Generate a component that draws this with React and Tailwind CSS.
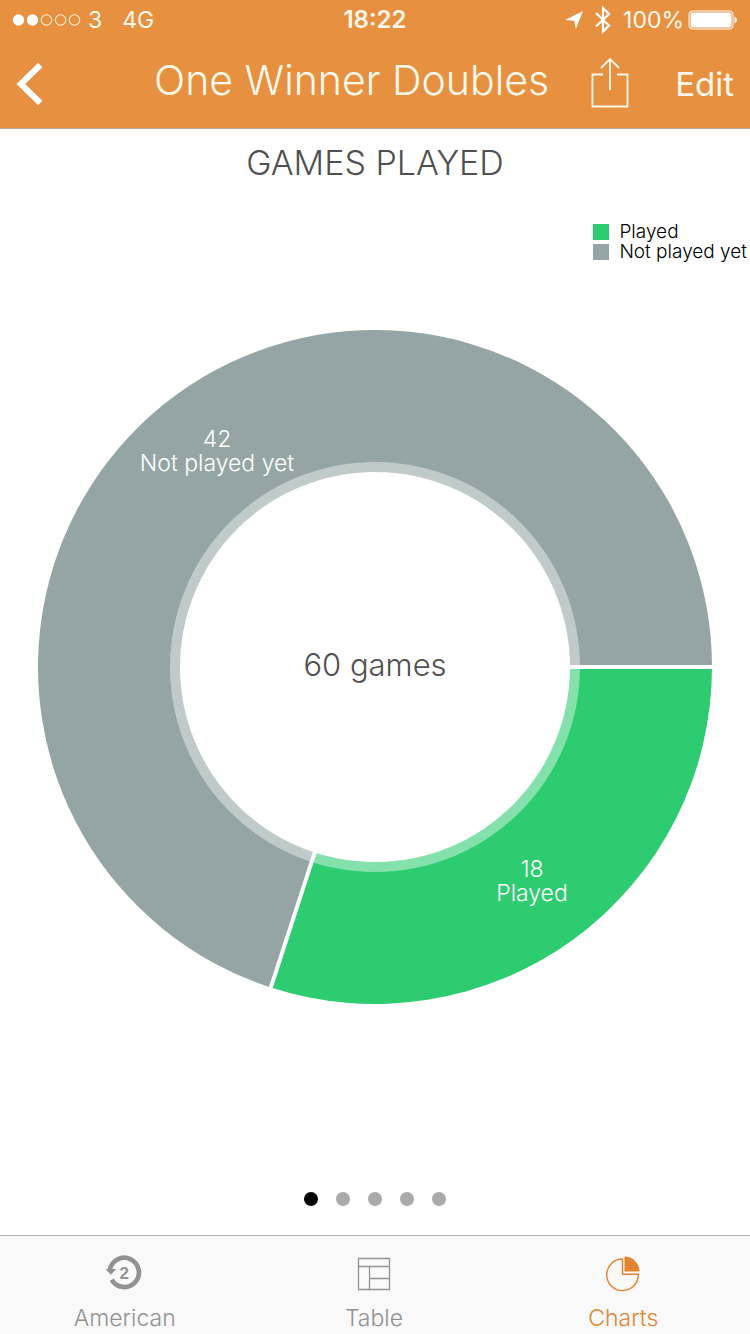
const CENTER = 337;
const OUTER = 337;
const HOLE = 195;
const RING = 205;

const slices = [
  { label: "Played", value: 18, color: "#2ecc71", x: 494, y: 547 },
  { label: "Not played yet", value: 42, color: "#95a5a5", x: 179, y: 117 },
];
const total = slices.reduce((sum, s) => sum + s.value, 0);

function point(radius, angle) {
  return [CENTER + radius * Math.cos(angle), CENTER + radius * Math.sin(angle)];
}

function slicePath(start, end) {
  const [x1, y1] = point(OUTER, start);
  const [x2, y2] = point(OUTER, end);
  const large = end - start > Math.PI ? 1 : 0;
  return `M${CENTER} ${CENTER}L${x1} ${y1}A${OUTER} ${OUTER} 0 ${large} 1 ${x2} ${y2}Z`;
}

function Donut() {
  let angle = 0;
  const arcs = slices.map((s) => {
    const start = angle;
    angle += (s.value / total) * Math.PI * 2;
    return { ...s, start, end: angle };
  });
  return (
    <svg viewBox="0 0 674 674" className="block w-full" role="img" aria-label="Games played">
      {arcs.map((a) => (
        <path key={a.label} d={slicePath(a.start, a.end)} fill={a.color} />
      ))}
      <circle cx={CENTER} cy={CENTER} r={RING} fill="#fff" fillOpacity="0.41" />
      {arcs.map((a) => {
        const [x, y] = point(OUTER + 2, a.start);
        return <line key={a.label} x1={CENTER} y1={CENTER} x2={x} y2={y} stroke="#fff" strokeWidth="4" />;
      })}
      <circle cx={CENTER} cy={CENTER} r={HOLE} fill="#fff" />
      <text x={CENTER} y="346" textAnchor="middle" fill="#505050" className="text-[31px] font-light">
        {total} games
      </text>
      <g fill="#fff" textAnchor="middle" className="text-[23px] font-light">
        {slices.map((s) => (
          <g key={s.label}>
            <text x={s.x} y={s.y}>{s.value}</text>
            <text x={s.x} y={s.y + 24}>{s.label}</text>
          </g>
        ))}
      </g>
    </svg>
  );
}

function StatusBar() {
  return (
    <div className="grid h-10 grid-cols-3 items-center px-3 text-[23px] leading-10">
      <div className="flex items-center">
        <svg width="70" height="14" viewBox="0 0 70 14" aria-hidden="true">
          <circle cx="6.5" cy="7" r="5.7" fill="#fff" />
          <circle cx="20.5" cy="7" r="5.7" fill="#fff" />
          <g fill="none" stroke="#fff0da" strokeWidth="1.1">
            <circle cx="34.5" cy="7" r="5.2" />
            <circle cx="48.5" cy="7" r="5.2" />
            <circle cx="62.5" cy="7" r="5.2" />
          </g>
        </svg>
        <span className="ml-1.5">3</span>
        <span className="ml-5">4G</span>
      </div>
      <div className="text-center text-[24px] font-semibold">18:22</div>
      <div className="flex items-center justify-end">
        <svg width="18" height="18" viewBox="0 0 18 18" aria-hidden="true">
          <path d="M0 9 18 0 10.800 18 9.200 9.800Z" fill="#fff" />
        </svg>
        <svg className="ml-3" width="16" height="28" viewBox="0 0 16 28" fill="none" stroke="#fff" strokeWidth="2.2" aria-hidden="true">
          <path d="M1 7 14 19.500 8 25.500V2L14 8 1 20.500" />
        </svg>
        <span className="ml-3">100%</span>
        <svg className="ml-1" width="50" height="20" viewBox="0 0 50 20" aria-hidden="true">
          <rect x="1" y="1" width="44" height="18" rx="3.500" fill="none" stroke="#fff" strokeWidth="1" />
          <rect x="2.500" y="2.500" width="41" height="15" rx="2" fill="#fff" />
          <path d="M46.500 6.500Q49 7.500 49 10T46.500 13.500Z" fill="#fff" />
        </svg>
      </div>
    </div>
  );
}

function TabLink({ label, active, children }) {
  return (
    <a
      href="#"
      aria-current={active ? "page" : undefined}
      className={
        active
          ? "flex flex-col items-center pt-4 text-[#e38430]"
          : "flex flex-col items-center pt-4 text-[#929292]"
      }
    >
      <svg width="44" height="44" viewBox="0 0 44 44" fill="none" stroke="currentColor" aria-hidden="true">
        {children}
      </svg>
      <span className="mt-2 text-[23px] leading-7 font-light">{label}</span>
    </a>
  );
}

export default function App() {
  return (
    <div className="flex min-h-screen flex-col bg-white font-['Inter',sans-serif]">
      <header className="border-b border-[#b9a99a] bg-[#e69040] text-[#fff9ec]">
        <StatusBar />
        <div className="flex h-[88px] items-center px-4">
          <button aria-label="Back" className="w-24 shrink-0">
            <svg width="28" height="44" viewBox="0 0 28 44" fill="none" stroke="#fff" strokeWidth="6" aria-hidden="true">
              <path d="M24.300 3 4.800 22 24.300 41" />
            </svg>
          </button>
          <h1 className="flex-1 pb-2 text-center text-[41px] leading-11 font-light whitespace-nowrap">One Winner Doubles</h1>
          <button aria-label="Share" className="shrink-0 pb-1">
            <svg width="38" height="52" viewBox="0 0 38 52" fill="none" stroke="currentColor" strokeWidth="1.800" aria-hidden="true">
              <path d="M12 18.500H1.500V50.500H36.500V18.500H26M19 34V3M10 12 19 3 28 12" />
            </svg>
          </button>
          <button className="ml-[46px] shrink-0 text-[33px] leading-11">Edit</button>
        </div>
      </header>

      <main className="flex flex-1 flex-col">
        <h2 className="pt-3 text-center text-[34px] leading-11 font-light text-[#505050]">GAMES PLAYED</h2>
        <ul className="mt-[37px] self-end pr-[3px] text-[19px] leading-5 font-light text-black">
          {slices.map((s) => (
            <li key={s.label} className="flex items-center gap-2.5">
              <span className="size-4" style={{ backgroundColor: s.color }} />
              {s.label}
            </li>
          ))}
        </ul>
        <div className="px-[38px] pt-[68px]">
          <Donut />
        </div>
        <div className="mt-auto flex justify-center gap-[18px] pb-[29px]">
          {[0, 1, 2, 3, 4].map((page) => (
            <button
              key={page}
              aria-label={`Chart ${page + 1}`}
              className={page === 0 ? "size-3.5 rounded-full bg-black" : "size-3.5 rounded-full bg-[#aaaaaa]"}
            />
          ))}
        </div>
      </main>

      <nav className="grid h-[99px] grid-cols-3 border-t border-[#b2b2b2] bg-[#f9f9f9] pr-0.5">
        <TabLink label="American">
          <path d="M6.900 18A14.600 14.600 0 1 1 8.700 27.800" strokeWidth="4.700" />
          <path d="M2.600 17H13.200L7.900 22.800Z" fill="currentColor" stroke="none" />
          <text x="21.3" y="26.500" textAnchor="middle" fill="currentColor" stroke="none" className="font-['Liberation_Sans',sans-serif] text-[17px] font-bold">2</text>
        </TabLink>
        <TabLink label="Table">
          <path d="M6.500 6.500H37.500V37.500H6.500ZM6.500 14.500H37.500M17.500 14.500V37.500M17.500 26.500H37.500" strokeWidth="1.300" />
        </TabLink>
        <TabLink label="Charts" active>
          <path d="M21.500 7A15.800 15.800 0 1 0 37.300 22.200H21.500Z" strokeWidth="1.500" />
          <path d="M23.500 4.500A15 15 0 0 1 38.500 19.500H23.500Z" fill="currentColor" stroke="none" />
        </TabLink>
      </nav>
    </div>
  );
}
